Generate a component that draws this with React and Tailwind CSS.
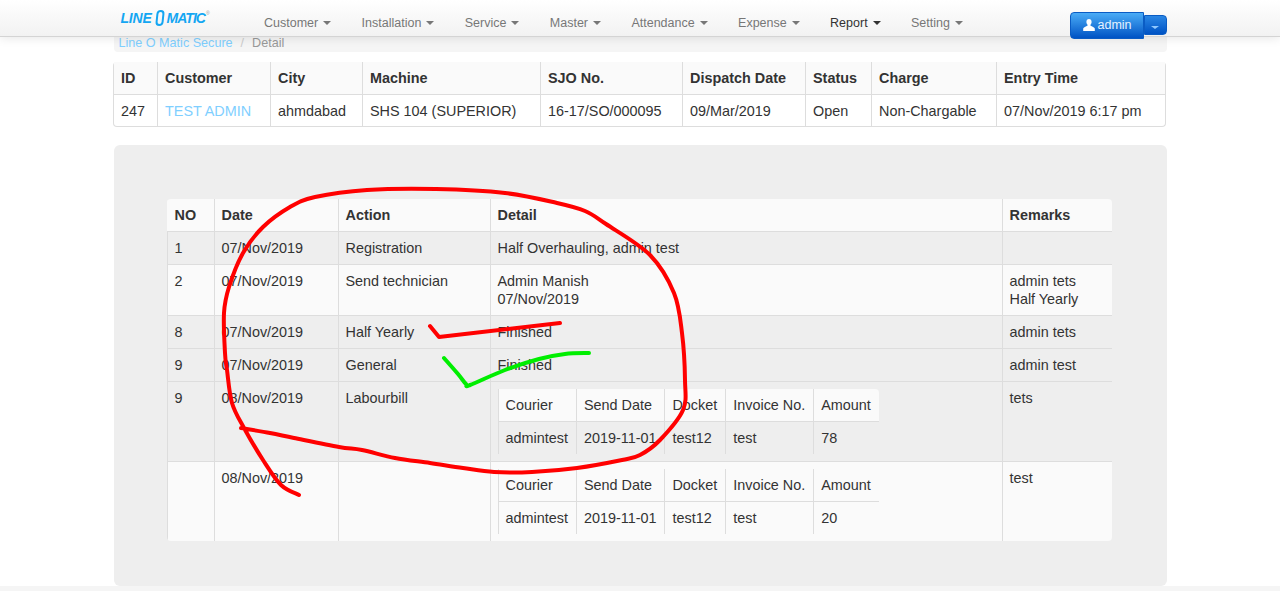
const navItems = ["Customer", "Installation", "Service", "Master", "Attendance", "Expense", "Report", "Setting"];

const jobHead = [
  ["ID", "w-[43px]"],
  ["Customer", "w-[113px]"],
  ["City", "w-[92px]"],
  ["Machine", "w-[178px]"],
  ["SJO No.", "w-[142px]"],
  ["Dispatch Date", "w-[123px]"],
  ["Status", "w-[66px]"],
  ["Charge", "w-[125px]"],
  ["Entry Time", "w-[169px]"],
];

const historyHead = [
  ["NO", "w-[47px]"],
  ["Date", "w-[124px]"],
  ["Action", "w-[152px]"],
  ["Detail", "w-[512px]"],
  ["Remarks", "w-[110px]"],
];

const courierHead = ["Courier", "Send Date", "Docket", "Invoice No.", "Amount"];

const th = "border-l border-[#ddd] px-[7px] py-[7px] text-left font-bold";
const td = "border-l border-t border-[#ddd] px-[7px] py-[7px] align-top";
const jobTd = "border-l border-t border-[#ddd] px-[7px] pb-[6px] pt-[7px] align-top";
const courierTd = "border-l border-t border-[#ddd] py-[7px] pl-[7px] pr-[8px] align-top";

// hand drawn marks, points traced from the screenshot
const bigCircle = [
  [299, 495], [281, 485], [263, 460], [244, 428], [232, 403], [227, 370], [225, 353], [224, 313], [229, 287], [243, 253],
  [263, 227], [290, 207], [315, 197], [367, 190], [436, 189], [505, 193], [557, 203], [585, 211], [606, 224], [650, 255], [674, 293],
  [682, 333], [685, 380], [683, 410], [660, 440], [640, 455], [622, 460], [577, 468], [532, 472], [494, 472], [463, 468], [430, 463],
  [395, 458], [362, 450], [339, 447], [294, 438], [270, 433], [241, 428],
];
const redTick = [[430, 326], [439, 337], [560, 323]];
const greenTick = [[444, 358], [458, 374], [466, 384], [470, 385], [505, 370], [539, 359], [565, 354], [589, 353]];

// catmull-rom through the traced points
function smooth(pts) {
  let d = `M${pts[0][0]} ${pts[0][1]}`;
  for (let i = 0; i < pts.length - 1; i++) {
    const p0 = pts[i - 1] || pts[i];
    const p1 = pts[i];
    const p2 = pts[i + 1];
    const p3 = pts[i + 2] || p2;
    const c1x = p1[0] + (p2[0] - p0[0]) / 6;
    const c1y = p1[1] + (p2[1] - p0[1]) / 6;
    const c2x = p2[0] - (p3[0] - p1[0]) / 6;
    const c2y = p2[1] - (p3[1] - p1[1]) / 6;
    d += ` C${c1x} ${c1y} ${c2x} ${c2y} ${p2[0]} ${p2[1]}`;
  }
  return d;
}

function Caret({ className }) {
  return <span className={`inline-block border-x-4 border-t-4 border-x-transparent ${className}`} />;
}

function CourierTable({ date, amount, gray }) {
  return (
    <table className="border-separate border-spacing-0 rounded-tr-[4px]">
      <thead>
        <tr className="bg-[#fafafa]">
          {courierHead.map((h, i) => (
            <th key={h} className={`border-l border-[#ddd] py-[7px] pl-[7px] pr-[8px] text-left font-normal ${i === 4 ? "rounded-tr-[4px]" : ""}`}>
              {h}
            </th>
          ))}
        </tr>
      </thead>
      <tbody className={gray ? "bg-[#eee]" : "bg-[#fafafa]"}>
        <tr>
          {["admintest", date, "test12", "test", amount].map((c, i) => (
            <td key={i} className={courierTd}>{c}</td>
          ))}
        </tr>
      </tbody>
    </table>
  );
}

export default function App() {
  return (
    <div className="relative h-[591px] overflow-hidden bg-white font-['Liberation_Sans',Arial,sans-serif] text-[14.4px] leading-[18px] text-[#333]">
      <header className="absolute inset-x-0 top-0 z-10 h-[37px] border-b border-[#d4d4d4] bg-gradient-to-b from-white to-[#f2f2f2] shadow-[0_1px_10px_rgba(0,0,0,0.1)]">
        <div className="relative mx-auto flex h-full w-[1053px] items-start">
          <div className="ml-[7px] flex h-[27px] w-[143px] items-center pt-[9px] text-[14px] font-bold italic leading-none tracking-[-0.2px] text-[#14a6f2]">
            <span>LINE</span>
            <span className="ml-[4px] mr-[3px] h-[16px] w-[8px] -skew-x-6 rounded-full border-2 border-[#14a6f2]" />
            <span className="tracking-[-1px]">MATIC</span>
            <span className="mb-[10px] ml-[1px] text-[5px] font-normal not-italic text-[#999]">®</span>
          </div>
          <nav className="ml-[0.5px] flex h-[36px] items-center gap-[30.4px] pt-[9px]">
            {navItems.map((item) => (
              <a key={item} className={`flex items-center gap-[5px] ${item === "Report" ? "text-[#333]" : "text-[#777]"}`}>
                <span className="text-[12.5px]">{item}</span>
                <Caret className={item === "Report" ? "border-t-[#333]" : "border-t-[#777]"} />
              </a>
            ))}
          </nav>
          <div className="ml-auto mt-[12px] flex items-start text-[12.5px]">
            <button className="flex h-[27px] w-[74px] items-center gap-[3px] rounded-l-[4px] border border-[#0a5cc4] bg-gradient-to-b from-[#4aacf6] to-[#0052c4] pb-[1px] pl-[12px] text-[#e6f2ff]">
              <svg width="12" height="12" viewBox="0 0 12 12" fill="#fff">
                <path d="M6 0C4.3 0 3.4 1.3 3.4 2.9c0 1.1.5 2.1 1.1 2.7v1.1C3 7.5.4 8.2.2 9.6V12h11.6V9.6c-.2-1.4-2.8-2.1-4.3-2.9V5.6c.6-.6 1.1-1.6 1.1-2.7C8.6 1.3 7.7 0 6 0z" />
              </svg>
              <span>admin</span>
            </button>
            <button className="mt-[3px] flex h-[20px] w-[23px] items-center justify-center rounded-r-[4px] border border-[#0a5cc4] bg-gradient-to-b from-[#2a86e4] to-[#0052c4] pt-[5px]">
              <span className="inline-block border-x-[4px] border-t-[3px] border-x-transparent border-t-[#8fc8ff]" />
            </button>
          </div>
        </div>
      </header>

      <main className="mx-auto w-[1053px] pt-[30px]">
        <div className="h-[22px] rounded-[4px] bg-[#f5f5f5] pl-[5px] pt-[4px] text-[12.6px] text-[#999]">
          <a className="text-[#7fcfff]">Line O Matic Secure</a>
          <span className="px-[8px] text-[#ccc]">/</span>
          <span>Detail</span>
        </div>

        <table className="-ml-[0.5px] mt-[10px] w-[1053px] table-fixed border-separate border-spacing-0 rounded-[4px] border-b border-l border-r border-[#ddd] bg-white">
          <colgroup>
            {jobHead.map(([h, w]) => (
              <col key={h} className={w} />
            ))}
          </colgroup>
          <thead>
            <tr className="bg-[#fafafa]">
              {jobHead.map(([h]) => (
                <th key={h} className={`${th} first:border-l-0`}>{h}</th>
              ))}
            </tr>
          </thead>
          <tbody>
            <tr>
              <td className={`${jobTd} border-l-0`}>247</td>
              <td className={jobTd}><a className="text-[#7fcfff]">TEST ADMIN</a></td>
              <td className={jobTd}>ahmdabad</td>
              <td className={jobTd}>SHS 104 (SUPERIOR)</td>
              <td className={jobTd}>16-17/SO/000095</td>
              <td className={jobTd}>09/Mar/2019</td>
              <td className={jobTd}>Open</td>
              <td className={jobTd}>Non-Chargable</td>
              <td className={jobTd}>07/Nov/2019 6:17 pm</td>
            </tr>
          </tbody>
        </table>

        <section className="mt-[18px] h-[441px] rounded-[6px] bg-[#eee] px-[53px] pt-[54px]">
          <table className="w-[945px] table-fixed border-separate border-spacing-0 overflow-hidden rounded-[4px] bg-[#fafafa]">
            <colgroup>
              {historyHead.map(([h, w]) => (
                <col key={h} className={w} />
              ))}
            </colgroup>
            <thead>
              <tr>
                {historyHead.map(([h]) => (
                  <th key={h} className={`${th} first:border-l-[#fafafa]`}>{h}</th>
                ))}
              </tr>
            </thead>
            <tbody>
              <tr className="bg-[#eee]">
                <td className={td}>1</td>
                <td className={td}>07/Nov/2019</td>
                <td className={td}>Registration</td>
                <td className={td}>Half Overhauling, admin test</td>
                <td className={td}></td>
              </tr>
              <tr>
                <td className={td}>2</td>
                <td className={td}>07/Nov/2019</td>
                <td className={td}>Send technician</td>
                <td className={td}>Admin Manish<br />07/Nov/2019</td>
                <td className={td}>admin tets<br />Half Yearly</td>
              </tr>
              <tr className="bg-[#eee]">
                <td className={td}>8</td>
                <td className={td}>07/Nov/2019</td>
                <td className={td}>Half Yearly</td>
                <td className={td}>Finished</td>
                <td className={td}>admin tets</td>
              </tr>
              <tr className="bg-[#eee]">
                <td className={td}>9</td>
                <td className={td}>07/Nov/2019</td>
                <td className={td}>General</td>
                <td className={td}>Finished</td>
                <td className={td}>admin test</td>
              </tr>
              <tr className="bg-[#eee]">
                <td className={td}>9</td>
                <td className={td}>08/Nov/2019</td>
                <td className={td}>Labourbill</td>
                <td className={td}><CourierTable date="2019-11-01" amount="78" gray /></td>
                <td className={td}>tets</td>
              </tr>
              <tr>
                <td className={td}></td>
                <td className={td}>08/Nov/2019</td>
                <td className={td}></td>
                <td className={td}><CourierTable date="2019-11-01" amount="20" /></td>
                <td className={td}>test</td>
              </tr>
            </tbody>
          </table>
        </section>
      </main>

      <footer className="h-[5px] bg-[#f5f5f5]" />

      <svg className="pointer-events-none absolute left-0 top-0 z-20" width="1280" height="591" fill="none" strokeLinecap="round" strokeLinejoin="round">
        <path d={smooth(bigCircle)} stroke="#ff0000" strokeWidth="4" />
        <path d={`M${redTick.map((p) => p.join(" ")).join(" L")}`} stroke="#ff0000" strokeWidth="4" />
        <path d={smooth(greenTick)} stroke="#00ee00" strokeWidth="4" />
      </svg>
    </div>
  );
}
